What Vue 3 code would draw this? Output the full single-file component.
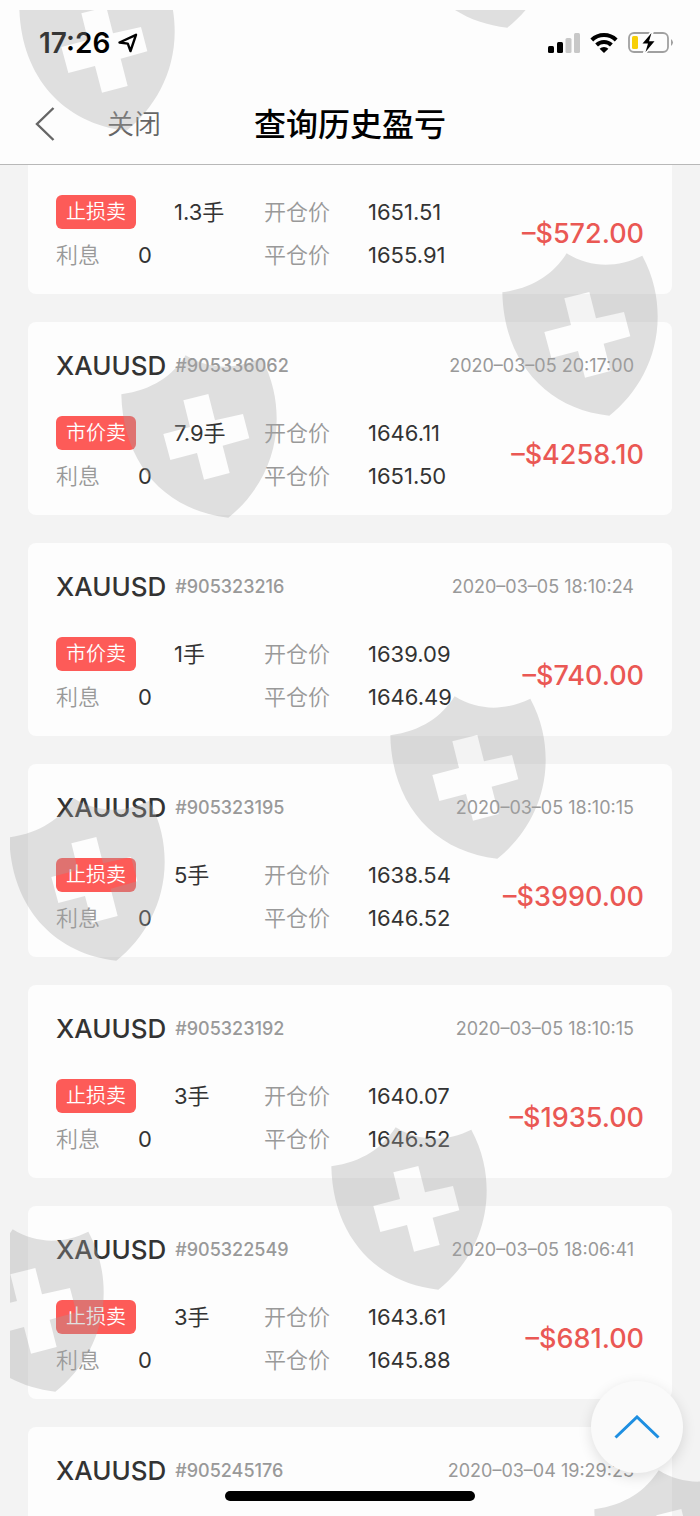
<script setup>
import { ref } from 'vue'

const listRef = ref(null)

// the first record is already scrolled half under the nav bar,
// the last one has only its head loaded
const records = [
  { type: '止损卖', lots: '1.3', open: '1651.51', close: '1655.91', profit: '–$572.00' },
  { id: '905336062', time: '2020–03–05 20:17:00', type: '市价卖', lots: '7.9', open: '1646.11', close: '1651.50', profit: '–$4258.10' },
  { id: '905323216', time: '2020–03–05 18:10:24', type: '市价卖', lots: '1', open: '1639.09', close: '1646.49', profit: '–$740.00' },
  { id: '905323195', time: '2020–03–05 18:10:15', type: '止损卖', lots: '5', open: '1638.54', close: '1646.52', profit: '–$3990.00' },
  { id: '905323192', time: '2020–03–05 18:10:15', type: '止损卖', lots: '3', open: '1640.07', close: '1646.52', profit: '–$1935.00' },
  { id: '905322549', time: '2020–03–05 18:06:41', type: '止损卖', lots: '3', open: '1643.61', close: '1645.88', profit: '–$681.00' },
  { id: '905245176', time: '2020–03–04 19:29:23' }
]

const shields = [
  { x: 9, y: -43 },
  { x: 390, y: -146 },
  { x: 492, y: 242 },
  { x: 111, y: 344 },
  { x: 380, y: 685 },
  { x: -1, y: 787 },
  { x: 321, y: 1116 },
  { x: -62, y: 1218 },
  { x: 584, y: 1459 }
]

const scrollToTop = () => {
  listRef.value.scrollTo({ top: 0, behavior: 'smooth' })
}
</script>

<template>
  <div class="page">
    <div class="status-bar">
      <div class="status-left">
        <span class="clock">17:26</span>
        <svg class="location" width="20" height="20" viewBox="0 0 20 20">
          <path d="M1.5 9.5 L18 1.8 L12.5 18 L9.8 10.6 Z" />
        </svg>
      </div>
      <div class="status-right">
        <svg width="32" height="20" viewBox="0 0 32 20">
          <rect x="0" y="13" width="6" height="7" rx="1.5" />
          <rect x="9" y="9" width="6" height="11" rx="1.5" />
          <rect x="17.5" y="5" width="6" height="15" rx="1.5" fill="#c8c8c8" />
          <rect x="26" y="0" width="6" height="20" rx="1.5" fill="#c8c8c8" />
        </svg>
        <svg width="28" height="20" viewBox="0 0 28 20">
          <path class="wave" d="M1.8 7 A17.5 17.5 0 0 1 26.2 7" />
          <path class="wave" d="M6.6 12 A10.6 10.6 0 0 1 21.4 12" />
          <path d="M14 20 L9.6 15.7 A6.4 6.4 0 0 1 18.4 15.7 Z" />
        </svg>
        <svg width="46" height="22" viewBox="0 0 46 22">
          <rect x="1" y="1" width="39" height="19" rx="5" fill="none" stroke="#a0a0a0" stroke-width="1.8" />
          <path d="M43 7 Q47 10.5 43 14 Z" fill="#a0a0a0" />
          <rect x="4" y="4" width="6" height="13" rx="1.5" fill="#f7cf08" />
          <path d="M22.5 -1 L13 12.5 H17.5 L14.5 22 H18 L28 9 H23 L26 -1 Z" fill="#fdfdfd" />
          <path d="M23.5 1 L14.5 11.5 H20 L17.5 20 L26.5 9.2 H21 Z" />
        </svg>
      </div>
    </div>

    <header class="nav-bar">
      <button class="back" type="button" aria-label="返回">
        <svg width="20" height="34" viewBox="0 0 20 34">
          <path d="M18.5 1 L2 17 L18.5 33" />
        </svg>
      </button>
      <button class="close" type="button">关闭</button>
      <h1 class="title">查询历史盈亏</h1>
    </header>

    <main ref="listRef" class="record-list">
      <article v-for="(item, index) in records" :key="index" class="card" :class="{ 'is-cut': !item.id }">
        <div v-if="item.id" class="card-head">
          <span class="symbol">XAUUSD</span>
          <span class="order-id">#{{ item.id }}</span>
          <time class="time">{{ item.time }}</time>
        </div>
        <div v-if="item.type" class="card-body">
          <div class="order">
            <div class="row">
              <span class="badge">{{ item.type }}</span>
              <span>{{ item.lots }}手</span>
            </div>
            <div class="row">
              <span class="label interest">利息</span>
              <span>0</span>
            </div>
          </div>
          <div class="prices">
            <div class="row">
              <span class="label price-label">开仓价</span>
              <span>{{ item.open }}</span>
            </div>
            <div class="row">
              <span class="label price-label">平仓价</span>
              <span>{{ item.close }}</span>
            </div>
          </div>
          <strong class="profit">{{ item.profit }}</strong>
        </div>
      </article>
    </main>

    <svg class="watermark" aria-hidden="true">
      <defs>
        <symbol id="shield" viewBox="0 0 468 492">
          <path
            fill-rule="evenodd"
            d="M1 121 C95 108 155 65 194 4 C265 48 345 48 421 11 C455 75 467 135 467 194 C467 320 405 425 322 491 C130 470 5 325 1 121 Z
               M187 139 L207 219 L127 240 L148 318 L228 297 L249 377 L326 357 L305 275 L385 253 L366 180 L282 199 L262 120 Z"
          />
        </symbol>
      </defs>
      <use v-for="(s, i) in shields" :key="i" href="#shield" :x="s.x" :y="s.y" width="156" height="164" />
    </svg>

    <button class="to-top" type="button" aria-label="回到顶部" @click="scrollToTop">
      <svg width="46" height="24" viewBox="0 0 46 24">
        <path d="M1.5 22.5 L23 2 L44.5 22.5" />
      </svg>
    </button>
    <div class="home-indicator"></div>
  </div>
</template>

<style>
body {
  margin: 0;
  background: #f3f3f3;
}
</style>

<style scoped>
.page {
  position: relative;
  display: flex;
  flex-direction: column;
  height: 100vh;
  overflow: hidden;
  background: #f3f3f3;
  color: #333;
  font-family: Inter, "Noto Sans CJK SC", sans-serif;
  font-size: 22px;
  line-height: 1;
}

button {
  padding: 0;
  border: none;
  background: none;
  font-family: inherit;
  line-height: inherit;
  cursor: pointer;
}

svg {
  display: block;
}

.status-bar {
  display: flex;
  box-sizing: border-box;
  flex: none;
  align-items: center;
  justify-content: space-between;
  height: 84px;
  padding: 2px 26px 0 39px;
  background: #fdfdfd;
  color: #000;
}

.status-left {
  display: flex;
  align-items: center;
  gap: 8px;
}

.clock {
  font-size: 28px;
  font-weight: 600;
  line-height: 36px;
}

.location {
  fill: none;
  stroke: #000;
  stroke-width: 2.4;
  stroke-linejoin: round;
}

.status-right {
  display: flex;
  align-items: center;
  gap: 10px;
}

.wave {
  fill: none;
  stroke: #000;
  stroke-width: 4;
}

.nav-bar {
  display: grid;
  flex: none;
  grid-template-columns: 72px 1fr auto 1fr 72px;
  align-items: center;
  height: 80px;
  padding: 0 35px;
  border-bottom: 1px solid #b8b8b8;
  background: #fdfdfd;
}

.back path {
  fill: none;
  stroke: #666;
  stroke-width: 2.4;
}

.close {
  justify-self: start;
  color: #666;
  font-size: 27px;
  font-weight: 350;
}

.title {
  margin: 0;
  padding-top: 2px;
  color: #000;
  font-size: 32px;
  font-weight: 500;
}

.record-list {
  display: flex;
  flex: 1;
  flex-direction: column;
  gap: 28px;
  min-height: 0;
  padding: 0 28px;
  overflow: hidden;
}

.card {
  box-sizing: border-box;
  flex: none;
  min-height: 193px;
  padding: 23px 28px 18px;
  border-radius: 8px;
  background: #fdfdfd;
}

.card.is-cut {
  min-height: 0;
  padding-top: 0;
  border-radius: 0 0 8px 8px;
}

.card-head {
  display: flex;
  align-items: center;
  height: 42px;
  padding-right: 10px;
}

.symbol {
  font-size: 26px;
  font-weight: 500;
}

.order-id {
  margin-left: 9px;
  color: #999;
  font-size: 18px;
  font-weight: 500;
}

.time {
  margin-left: auto;
  color: #999;
  font-size: 18px;
}

.card-body {
  display: flex;
  align-items: center;
  margin-top: 24px;
}

.card.is-cut .card-body {
  margin-top: 25px;
}

.order {
  width: 208px;
}

.row {
  display: flex;
  align-items: center;
  height: 43px;
}

.badge {
  width: 80px;
  margin-right: 38px;
  border-radius: 6px;
  background: #fd5b58;
  color: #fff;
  font-size: 20px;
  font-weight: 350;
  line-height: 34px;
  text-align: center;
}

.label {
  color: #999;
  font-weight: 350;
}

.interest {
  width: 82px;
}

.price-label {
  width: 104px;
}

.profit {
  margin-left: auto;
  color: #ea5854;
  font-size: 27px;
  font-weight: 500;
}

.watermark {
  position: absolute;
  top: 10px;
  left: 10px;
  width: calc(100% - 10px);
  height: calc(100% - 10px);
  fill: #a3a3a3;
  opacity: 0.33;
  pointer-events: none;
}

.to-top {
  position: absolute;
  right: 17px;
  bottom: 43px;
  display: flex;
  align-items: center;
  justify-content: center;
  width: 92px;
  height: 92px;
  border-radius: 50%;
  background: #fafafa;
  box-shadow: 0 4px 14px rgba(0, 0, 0, 0.12);
}

.to-top path {
  fill: none;
  stroke: #1e8fe1;
  stroke-width: 3;
}

.home-indicator {
  position: absolute;
  bottom: 15px;
  left: 50%;
  width: 250px;
  height: 10px;
  border-radius: 5px;
  background: #000;
  transform: translateX(-50%);
}
</style>
